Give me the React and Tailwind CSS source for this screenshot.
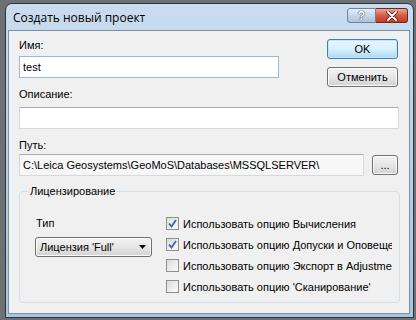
export default function App() {
  const f = "font-['Liberation_Sans',Arial,sans-serif] text-[11px] leading-[14px] text-black";
  const rows = [
    { t: "Использовать опцию Вычисления", c: true },
    { t: "Использовать опцию Допуски и Оповещения", c: true },
    { t: "Использовать опцию Экспорт в Adjustment", c: false },
    { t: "Использовать опцию 'Сканирование'", c: false },
  ];
  return (
    <div className={"w-[416px] h-[320px] overflow-hidden bg-[#6d7174] pl-[5px] pt-[3px] " + f}>
      <div className="w-[409px] h-[315px] border border-[#2c3640] rounded-t-[7px] bg-gradient-to-b from-[#c9dcef] via-[#b9d0e8] to-[#a9c4df] flex flex-col">
        <div className="h-[26px] flex items-start shrink-0">
          <span className="ml-[7px] mt-[6px] text-[12px] leading-[15px] font-['Open_Sans',Arial,sans-serif] text-[#000]">Создать новый проект</span>
          <div className="ml-auto mt-[4px] mr-[5px] flex">
            <div className="w-[29px] h-[15px] rounded-l-[3px] border border-[#6f8299] bg-gradient-to-b from-[#e4eef8] via-[#c6d7e9] to-[#aec3da] flex items-center justify-center">
              <span className="text-[12px] leading-[12px] font-bold text-white [text-shadow:0_0_1px_#333,0_0_1px_#333]">?</span>
            </div>
            <div className="w-[32px] h-[15px] rounded-r-[3px] border border-l-0 border-[#6b2a20] bg-gradient-to-b from-[#eba593] via-[#d65a41] to-[#c43a22] flex items-center justify-center">
              <svg width="12" height="10" viewBox="0 0 12 10">
                <path d="M2 1 L10 9 M10 1 L2 9" stroke="#3a1a14" strokeWidth="3.4" strokeLinecap="round" />
                <path d="M2 1 L10 9 M10 1 L2 9" stroke="#ffffff" strokeWidth="2" strokeLinecap="round" />
              </svg>
            </div>
          </div>
        </div>
        <div className="ml-[2px] mr-[3px] mb-[3px] flex-1 border border-[#7d91a6] bg-[#f0f0f0] pl-[10px] pr-[11px] pt-[7px] flex flex-col">
          <div className="flex items-start h-[40px]">
            <div className="flex flex-col w-[260px]">
              <span>Имя:</span>
              <div className="mt-[4px] h-[22px] border border-[#9fb7cf] bg-white flex items-center pl-[3px]">test</div>
            </div>
            <div className="ml-auto mt-[1px] flex flex-col gap-[8px]">
              <div className="w-[71px] h-[20px] rounded-[3px] border border-[#3c7fb1] bg-gradient-to-b from-[#eaf6fd] via-[#d9f0fc] to-[#a7d9f5] shadow-[inset_0_0_0_1px_#bfe6f9] flex items-center justify-center">OK</div>
              <div className="w-[71px] h-[20px] rounded-[3px] border border-[#707070] bg-gradient-to-b from-[#f4f4f4] via-[#e6e6e6] to-[#d2d2d2] shadow-[inset_0_0_0_1px_#fbfbfb] flex items-center justify-center">Отменить</div>
            </div>
          </div>
          <span className="mt-[9px]">Описание:</span>
          <div className="mt-[6px] h-[22px] w-[380px] border border-[#d5d9de] border-t-[#abadb3] bg-white"></div>
          <span className="mt-[9px]">Путь:</span>
          <div className="mt-[2px] flex items-start gap-[8px]">
            <div className="w-[345px] h-[22px] border border-[#d5d9de] border-t-[#abadb3] bg-[#f7f7f7] flex items-center pl-[3px] whitespace-nowrap overflow-hidden">C:\Leica Geosystems\GeoMoS\Databases\MSSQLSERVER\</div>
            <div className="mt-[1px] w-[26px] h-[20px] rounded-[3px] border border-[#707070] bg-gradient-to-b from-[#f4f4f4] via-[#e6e6e6] to-[#d2d2d2] shadow-[inset_0_0_0_1px_#fbfbfb] flex items-center justify-center leading-[10px]">...</div>
          </div>
          <div className="relative mt-[15px] w-[381px] h-[112px] border border-[#d5dfe5] rounded-[4px] flex pl-[15px]">
            <span className="absolute left-[8px] top-[-8px] px-[2px] bg-[#f0f0f0]">Лицензирование</span>
            <div className="flex flex-col pt-[24px] w-[117px]">
              <span className="ml-[1px]">Тип</span>
              <div className="mt-[7px] h-[20px] rounded-[3px] border border-[#707070] bg-gradient-to-b from-[#f4f4f4] via-[#e6e6e6] to-[#d2d2d2] shadow-[inset_0_0_0_1px_#fbfbfb] flex items-center pl-[4px] pr-[5px]">
                <span className="whitespace-nowrap">Лицензия 'Full'</span>
                <svg className="ml-auto" width="7" height="4" viewBox="0 0 7 4"><path d="M0 0 H7 L3.5 4 Z" fill="#000" /></svg>
              </div>
            </div>
            <div className="ml-[14px] pt-[21px] flex flex-col w-[226px] overflow-hidden">
              {rows.map((r) => (
                <div key={r.t} className="h-[21px] flex items-center whitespace-nowrap">
                  <div className="w-[13px] h-[13px] shrink-0 border border-[#8e8f8f] bg-gradient-to-br from-[#dcdcdc] to-[#fbfbfb] p-[1px] flex items-center justify-center">
                    {r.c && (
                      <svg width="9" height="9" viewBox="0 0 9 9"><path d="M1 4.5 L3.5 7.5 L8 1" stroke="#4c61a0" strokeWidth="1.8" fill="none" /></svg>
                    )}
                  </div>
                  <span className="ml-[4px]">{r.t}</span>
                </div>
              ))}
            </div>
          </div>
        </div>
      </div>
    </div>
  );
}
